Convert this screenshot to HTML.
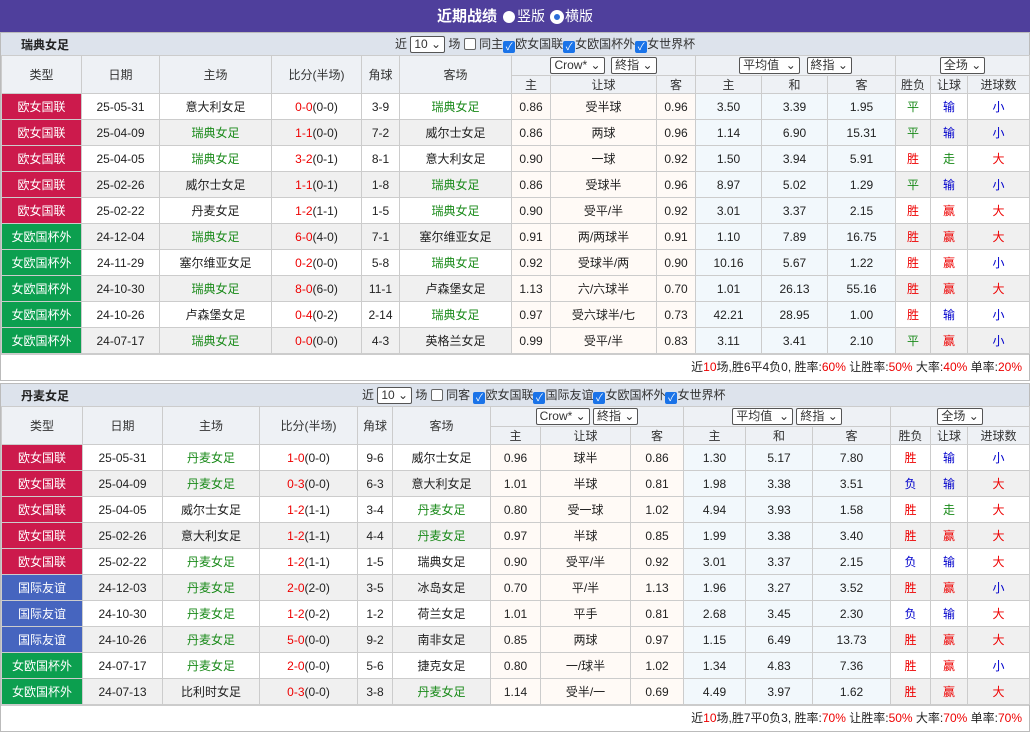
<!DOCTYPE html>
<html><head><meta charset="utf-8"><style>
*{margin:0;padding:0;box-sizing:border-box}
body{width:1030px;height:732px;background:#fff;font-family:"Liberation Sans","Noto Sans CJK SC",sans-serif;font-size:12px;color:#222;overflow:hidden}
.top{height:32px;background:#4f3f9c;color:#fff;text-align:center;font-size:14px;line-height:32px}
.top b{font-size:15px}
.rad{display:inline-block;width:12px;height:12px;border-radius:50%;background:#fff;vertical-align:-2px;margin:0 2px 0 6px}
.rad.on{border:3px solid #fff;background:#2a6cd8;box-shadow:0 0 0 1px #fff}
.wrap{border:1px solid #bbb;margin:0;width:1030px}
.bar{height:22px;background:#dde3ec;position:relative;line-height:22px}
.bar .t{position:absolute;left:20px;top:1px;font-weight:bold;font-size:12px}
.bar .f{position:absolute;top:0;font-size:12px;color:#333;white-space:nowrap}
.sel{display:inline-block;border:1px solid #555;background:#fff;height:17px;line-height:15px;padding:0 3px;font-size:12px;vertical-align:middle;border-radius:2px}
.cb{display:inline-block;width:12px;height:12px;border:1px solid #666;border-radius:2px;background:#fff;vertical-align:-2px}
.cb.on{background:#1a73e8;border-color:#1a73e8;color:#fff;font-size:10px;line-height:11px;text-align:center}
table{border-collapse:collapse;table-layout:fixed;width:1028px}
td,th{border:1px solid #ccc;text-align:center;font-weight:normal;font-size:12px;white-space:nowrap;overflow:hidden}
th{background:#eef1f5;color:#333}
thead tr.h1 th{height:20px}
thead tr.h2 th{height:18px}
tbody td{height:26px}
tr.g td{background:#f0f0f0}
td.p,tr.g td.p{background:#fffaf6}
td.b,tr.g td.b{background:#f2f8fc}
td.ty{color:#fff}
tr td.r{background:#cc1a4c!important}
tr td.gr{background:#0c9f4f!important}
tr td.bl{background:#4665bf!important}
.hm{color:#1a8a1a}
.sc{color:#e00}
.W{color:#e00}.D{color:#1a8a1a}.L{color:#00c}
.sum{height:26px;text-align:right;padding-right:7px;line-height:25px;border-top:1px solid #ccc}
.sum i{font-style:normal;color:#e00}
</style></head><body>
<div class="top"><b>近期战绩</b><span class="rad"></span>竖版<span class="rad on"></span>横版</div>
<div class="wrap">
<div class="bar"><span class="t">瑞典女足</span><span class="f" style="left:394px">近 <span class="sel">10 ⌄</span> 场 <span class="cb"></span> 同主<span class="cb on">✓</span>欧女国联<span class="cb on">✓</span>女欧国杯外<span class="cb on">✓</span>女世界杯</span></div>
<table>
<colgroup><col style="width:80px"><col style="width:78px"><col style="width:112px"><col style="width:90px"><col style="width:38px"><col style="width:112px"><col style="width:39px"><col style="width:106px"><col style="width:39px"><col style="width:66px"><col style="width:66px"><col style="width:68px"><col style="width:35px"><col style="width:37px"><col style="width:62px"></colgroup>
<thead><tr class="h1"><th rowspan="2">类型</th><th rowspan="2">日期</th><th rowspan="2">主场</th><th rowspan="2">比分(半场)</th><th rowspan="2">角球</th><th rowspan="2">客场</th><th colspan="3"><span class="sel">Crow* ⌄</span> &nbsp;<span class="sel">終指 ⌄</span></th><th colspan="3"><span class="sel">平均值 &nbsp;⌄</span> &nbsp;<span class="sel">終指 ⌄</span></th><th colspan="3"><span class="sel">全场 ⌄</span></th></tr>
<tr class="h2"><th>主</th><th>让球</th><th>客</th><th>主</th><th>和</th><th>客</th><th>胜负</th><th>让球</th><th>进球数</th></tr></thead>
<tbody>
<tr><td class="ty r">欧女国联</td><td>25-05-31</td><td>意大利女足</td><td><span class="sc">0-0</span>(0-0)</td><td>3-9</td><td class="hm">瑞典女足</td><td class="p">0.86</td><td class="p">受半球</td><td class="p">0.96</td><td class="b">3.50</td><td class="b">3.39</td><td class="b">1.95</td><td class="D">平</td><td class="L">输</td><td class="L">小</td></tr>
<tr class="g"><td class="ty r">欧女国联</td><td>25-04-09</td><td class="hm">瑞典女足</td><td><span class="sc">1-1</span>(0-0)</td><td>7-2</td><td>威尔士女足</td><td class="p">0.86</td><td class="p">两球</td><td class="p">0.96</td><td class="b">1.14</td><td class="b">6.90</td><td class="b">15.31</td><td class="D">平</td><td class="L">输</td><td class="L">小</td></tr>
<tr><td class="ty r">欧女国联</td><td>25-04-05</td><td class="hm">瑞典女足</td><td><span class="sc">3-2</span>(0-1)</td><td>8-1</td><td>意大利女足</td><td class="p">0.90</td><td class="p">一球</td><td class="p">0.92</td><td class="b">1.50</td><td class="b">3.94</td><td class="b">5.91</td><td class="W">胜</td><td class="D">走</td><td class="W">大</td></tr>
<tr class="g"><td class="ty r">欧女国联</td><td>25-02-26</td><td>威尔士女足</td><td><span class="sc">1-1</span>(0-1)</td><td>1-8</td><td class="hm">瑞典女足</td><td class="p">0.86</td><td class="p">受球半</td><td class="p">0.96</td><td class="b">8.97</td><td class="b">5.02</td><td class="b">1.29</td><td class="D">平</td><td class="L">输</td><td class="L">小</td></tr>
<tr><td class="ty r">欧女国联</td><td>25-02-22</td><td>丹麦女足</td><td><span class="sc">1-2</span>(1-1)</td><td>1-5</td><td class="hm">瑞典女足</td><td class="p">0.90</td><td class="p">受平/半</td><td class="p">0.92</td><td class="b">3.01</td><td class="b">3.37</td><td class="b">2.15</td><td class="W">胜</td><td class="W">赢</td><td class="W">大</td></tr>
<tr class="g"><td class="ty gr">女欧国杯外</td><td>24-12-04</td><td class="hm">瑞典女足</td><td><span class="sc">6-0</span>(4-0)</td><td>7-1</td><td>塞尔维亚女足</td><td class="p">0.91</td><td class="p">两/两球半</td><td class="p">0.91</td><td class="b">1.10</td><td class="b">7.89</td><td class="b">16.75</td><td class="W">胜</td><td class="W">赢</td><td class="W">大</td></tr>
<tr><td class="ty gr">女欧国杯外</td><td>24-11-29</td><td>塞尔维亚女足</td><td><span class="sc">0-2</span>(0-0)</td><td>5-8</td><td class="hm">瑞典女足</td><td class="p">0.92</td><td class="p">受球半/两</td><td class="p">0.90</td><td class="b">10.16</td><td class="b">5.67</td><td class="b">1.22</td><td class="W">胜</td><td class="W">赢</td><td class="L">小</td></tr>
<tr class="g"><td class="ty gr">女欧国杯外</td><td>24-10-30</td><td class="hm">瑞典女足</td><td><span class="sc">8-0</span>(6-0)</td><td>11-1</td><td>卢森堡女足</td><td class="p">1.13</td><td class="p">六/六球半</td><td class="p">0.70</td><td class="b">1.01</td><td class="b">26.13</td><td class="b">55.16</td><td class="W">胜</td><td class="W">赢</td><td class="W">大</td></tr>
<tr><td class="ty gr">女欧国杯外</td><td>24-10-26</td><td>卢森堡女足</td><td><span class="sc">0-4</span>(0-2)</td><td>2-14</td><td class="hm">瑞典女足</td><td class="p">0.97</td><td class="p">受六球半/七</td><td class="p">0.73</td><td class="b">42.21</td><td class="b">28.95</td><td class="b">1.00</td><td class="W">胜</td><td class="L">输</td><td class="L">小</td></tr>
<tr class="g"><td class="ty gr">女欧国杯外</td><td>24-07-17</td><td class="hm">瑞典女足</td><td><span class="sc">0-0</span>(0-0)</td><td>4-3</td><td>英格兰女足</td><td class="p">0.99</td><td class="p">受平/半</td><td class="p">0.83</td><td class="b">3.11</td><td class="b">3.41</td><td class="b">2.10</td><td class="D">平</td><td class="W">赢</td><td class="L">小</td></tr>
</tbody></table>
<div class="sum">近<i>10</i>场,胜6平4负0, 胜率:<i>60%</i> 让胜率:<i>50%</i> 大率:<i>40%</i> 单率:<i>20%</i></div>
</div>
<div class="wrap" style="margin-top:2px">
<div class="bar"><span class="t">丹麦女足</span><span class="f" style="left:361px">近 <span class="sel">10 ⌄</span> 场 <span class="cb"></span> 同客 <span class="cb on">✓</span>欧女国联<span class="cb on">✓</span>国际友谊<span class="cb on">✓</span>女欧国杯外<span class="cb on">✓</span>女世界杯</span></div>
<table>
<colgroup><col style="width:81px"><col style="width:80px"><col style="width:97px"><col style="width:98px"><col style="width:35px"><col style="width:98px"><col style="width:50px"><col style="width:90px"><col style="width:53px"><col style="width:62px"><col style="width:67px"><col style="width:78px"><col style="width:40px"><col style="width:37px"><col style="width:62px"></colgroup>
<thead><tr class="h1"><th rowspan="2">类型</th><th rowspan="2">日期</th><th rowspan="2">主场</th><th rowspan="2">比分(半场)</th><th rowspan="2">角球</th><th rowspan="2">客场</th><th colspan="3"><span class="sel">Crow* ⌄</span> <span class="sel">終指 ⌄</span></th><th colspan="3"><span class="sel">平均值 &nbsp;⌄</span> <span class="sel">終指 ⌄</span></th><th colspan="3"><span class="sel">全场 ⌄</span></th></tr>
<tr class="h2"><th>主</th><th>让球</th><th>客</th><th>主</th><th>和</th><th>客</th><th>胜负</th><th>让球</th><th>进球数</th></tr></thead>
<tbody>
<tr><td class="ty r">欧女国联</td><td>25-05-31</td><td class="hm">丹麦女足</td><td><span class="sc">1-0</span>(0-0)</td><td>9-6</td><td>威尔士女足</td><td class="p">0.96</td><td class="p">球半</td><td class="p">0.86</td><td class="b">1.30</td><td class="b">5.17</td><td class="b">7.80</td><td class="W">胜</td><td class="L">输</td><td class="L">小</td></tr>
<tr class="g"><td class="ty r">欧女国联</td><td>25-04-09</td><td class="hm">丹麦女足</td><td><span class="sc">0-3</span>(0-0)</td><td>6-3</td><td>意大利女足</td><td class="p">1.01</td><td class="p">半球</td><td class="p">0.81</td><td class="b">1.98</td><td class="b">3.38</td><td class="b">3.51</td><td class="L">负</td><td class="L">输</td><td class="W">大</td></tr>
<tr><td class="ty r">欧女国联</td><td>25-04-05</td><td>威尔士女足</td><td><span class="sc">1-2</span>(1-1)</td><td>3-4</td><td class="hm">丹麦女足</td><td class="p">0.80</td><td class="p">受一球</td><td class="p">1.02</td><td class="b">4.94</td><td class="b">3.93</td><td class="b">1.58</td><td class="W">胜</td><td class="D">走</td><td class="W">大</td></tr>
<tr class="g"><td class="ty r">欧女国联</td><td>25-02-26</td><td>意大利女足</td><td><span class="sc">1-2</span>(1-1)</td><td>4-4</td><td class="hm">丹麦女足</td><td class="p">0.97</td><td class="p">半球</td><td class="p">0.85</td><td class="b">1.99</td><td class="b">3.38</td><td class="b">3.40</td><td class="W">胜</td><td class="W">赢</td><td class="W">大</td></tr>
<tr><td class="ty r">欧女国联</td><td>25-02-22</td><td class="hm">丹麦女足</td><td><span class="sc">1-2</span>(1-1)</td><td>1-5</td><td>瑞典女足</td><td class="p">0.90</td><td class="p">受平/半</td><td class="p">0.92</td><td class="b">3.01</td><td class="b">3.37</td><td class="b">2.15</td><td class="L">负</td><td class="L">输</td><td class="W">大</td></tr>
<tr class="g"><td class="ty bl">国际友谊</td><td>24-12-03</td><td class="hm">丹麦女足</td><td><span class="sc">2-0</span>(2-0)</td><td>3-5</td><td>冰岛女足</td><td class="p">0.70</td><td class="p">平/半</td><td class="p">1.13</td><td class="b">1.96</td><td class="b">3.27</td><td class="b">3.52</td><td class="W">胜</td><td class="W">赢</td><td class="L">小</td></tr>
<tr><td class="ty bl">国际友谊</td><td>24-10-30</td><td class="hm">丹麦女足</td><td><span class="sc">1-2</span>(0-2)</td><td>1-2</td><td>荷兰女足</td><td class="p">1.01</td><td class="p">平手</td><td class="p">0.81</td><td class="b">2.68</td><td class="b">3.45</td><td class="b">2.30</td><td class="L">负</td><td class="L">输</td><td class="W">大</td></tr>
<tr class="g"><td class="ty bl">国际友谊</td><td>24-10-26</td><td class="hm">丹麦女足</td><td><span class="sc">5-0</span>(0-0)</td><td>9-2</td><td>南非女足</td><td class="p">0.85</td><td class="p">两球</td><td class="p">0.97</td><td class="b">1.15</td><td class="b">6.49</td><td class="b">13.73</td><td class="W">胜</td><td class="W">赢</td><td class="W">大</td></tr>
<tr><td class="ty gr">女欧国杯外</td><td>24-07-17</td><td class="hm">丹麦女足</td><td><span class="sc">2-0</span>(0-0)</td><td>5-6</td><td>捷克女足</td><td class="p">0.80</td><td class="p">一/球半</td><td class="p">1.02</td><td class="b">1.34</td><td class="b">4.83</td><td class="b">7.36</td><td class="W">胜</td><td class="W">赢</td><td class="L">小</td></tr>
<tr class="g"><td class="ty gr">女欧国杯外</td><td>24-07-13</td><td>比利时女足</td><td><span class="sc">0-3</span>(0-0)</td><td>3-8</td><td class="hm">丹麦女足</td><td class="p">1.14</td><td class="p">受半/一</td><td class="p">0.69</td><td class="b">4.49</td><td class="b">3.97</td><td class="b">1.62</td><td class="W">胜</td><td class="W">赢</td><td class="W">大</td></tr>
</tbody></table>
<div class="sum">近<i>10</i>场,胜7平0负3, 胜率:<i>70%</i> 让胜率:<i>50%</i> 大率:<i>70%</i> 单率:<i>70%</i></div>
</div>
</body></html>
